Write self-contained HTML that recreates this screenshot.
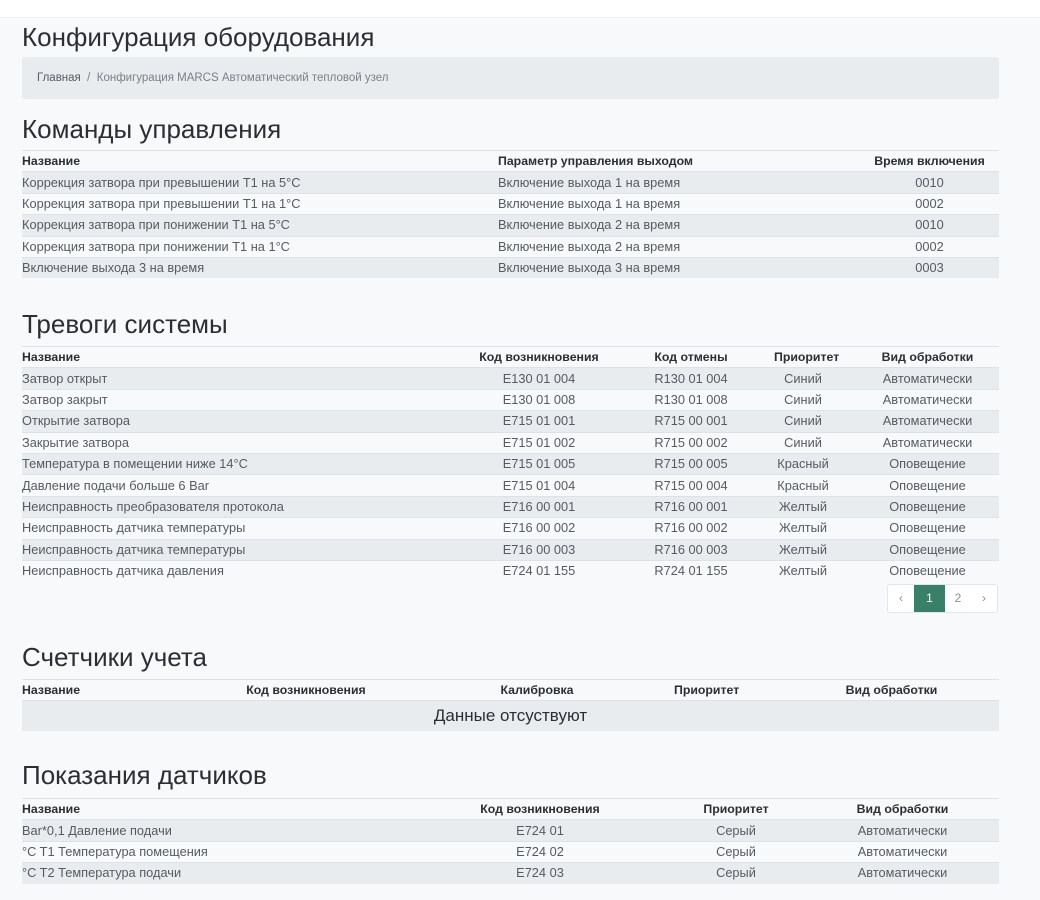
<!DOCTYPE html>
<html><head><meta charset="utf-8"><style>
body{margin:0;width:1040px;height:900px;background:#f8f9fa;font-family:"Liberation Sans","DejaVu Sans",sans-serif;color:#555b61;position:relative;overflow:hidden}
.top{position:absolute;left:0;top:0;width:1040px;height:17px;background:#fff;border-bottom:1px solid #eceef0}
.h{position:absolute;left:22px;font-size:26px;color:#2b2f33;white-space:nowrap;margin:0;font-weight:normal}
.bc{position:absolute;left:22px;top:57px;width:977px;height:42px;background:#e9ecef;border-radius:3px;font-size:11.5px;line-height:42px;color:#7a8087}
.bc span{color:#555b61;margin-left:15px}
table{position:absolute;left:22px;width:977px;border-collapse:collapse;table-layout:fixed;font-size:12.8px}
td,th{height:20.4px;padding:0;white-space:nowrap;overflow:visible;text-align:center;border-top:1px solid #dee2e6;line-height:14px}
th{font-weight:bold;color:#2b2f33;border-bottom:1px solid #dee2e6;font-size:12.3px}
td:first-child,th:first-child{text-align:left}
tbody tr:nth-child(odd){background:#e9ecef}
.l{text-align:left!important}
.pg{position:absolute;left:887px;top:584px;height:27px;display:flex;border:1px solid #e3e6e9;border-radius:3px;background:#fff;font-size:12px;color:#8a9096}
.pg div{width:26px;line-height:27px;text-align:center}
.pg .a{background:#3a7f67;color:#fff;width:31px}
</style></head><body>
<div class="top"></div>
<h1 class="h" style="top:22px">Конфигурация оборудования</h1>
<div class="bc"><span>Главная</span> &nbsp;/&nbsp; Конфигурация MARCS Автоматический тепловой узел</div>

<h2 class="h" style="top:114px">Команды управления</h2>
<table style="top:150px"><colgroup><col style="width:476px"><col style="width:362px"><col style="width:139px"></colgroup>
<thead><tr><th>Название</th><th class="l">Параметр управления выходом</th><th>Время включения</th></tr></thead>
<tbody>
<tr><td>Коррекция затвора при превышении Т1 на 5°С</td><td class="l">Включение выхода 1 на время</td><td>0010</td></tr>
<tr><td>Коррекция затвора при превышении Т1 на 1°С</td><td class="l">Включение выхода 1 на время</td><td>0002</td></tr>
<tr><td>Коррекция затвора при понижении Т1 на 5°С</td><td class="l">Включение выхода 2 на время</td><td>0010</td></tr>
<tr><td>Коррекция затвора при понижении Т1 на 1°С</td><td class="l">Включение выхода 2 на время</td><td>0002</td></tr>
<tr><td>Включение выхода 3 на время</td><td class="l">Включение выхода 3 на время</td><td>0003</td></tr>
</tbody></table>

<h2 class="h" style="top:309px">Тревоги системы</h2>
<table style="top:346px"><colgroup><col style="width:448px"><col style="width:138px"><col style="width:166px"><col style="width:58px"><col style="width:167px"></colgroup>
<thead><tr><th>Название</th><th>Код возникновения</th><th>Код отмены</th><th>Приоритет</th><th style="padding-left:24px">Вид обработки</th></tr></thead>
<tbody>
<tr><td>Затвор открыт</td><td>E130 01 004</td><td>R130 01 004</td><td>Синий</td><td style="padding-left:24px">Автоматически</td></tr>
<tr><td>Затвор закрыт</td><td>E130 01 008</td><td>R130 01 008</td><td>Синий</td><td style="padding-left:24px">Автоматически</td></tr>
<tr><td>Открытие затвора</td><td>E715 01 001</td><td>R715 00 001</td><td>Синий</td><td style="padding-left:24px">Автоматически</td></tr>
<tr><td>Закрытие затвора</td><td>E715 01 002</td><td>R715 00 002</td><td>Синий</td><td style="padding-left:24px">Автоматически</td></tr>
<tr><td>Температура в помещении ниже 14°С</td><td>E715 01 005</td><td>R715 00 005</td><td>Красный</td><td style="padding-left:24px">Оповещение</td></tr>
<tr><td>Давление подачи больше 6 Bar</td><td>E715 01 004</td><td>R715 00 004</td><td>Красный</td><td style="padding-left:24px">Оповещение</td></tr>
<tr><td>Неисправность преобразователя протокола</td><td>E716 00 001</td><td>R716 00 001</td><td>Желтый</td><td style="padding-left:24px">Оповещение</td></tr>
<tr><td>Неисправность датчика температуры</td><td>E716 00 002</td><td>R716 00 002</td><td>Желтый</td><td style="padding-left:24px">Оповещение</td></tr>
<tr><td>Неисправность датчика температуры</td><td>E716 00 003</td><td>R716 00 003</td><td>Желтый</td><td style="padding-left:24px">Оповещение</td></tr>
<tr><td>Неисправность датчика давления</td><td>E724 01 155</td><td>R724 01 155</td><td>Желтый</td><td style="padding-left:24px">Оповещение</td></tr>
</tbody></table>
<div class="pg"><div>‹</div><div class="a">1</div><div>2</div><div>›</div></div>

<h2 class="h" style="top:642px">Счетчики учета</h2>
<table style="top:679px"><colgroup><col style="width:190px"><col style="width:188px"><col style="width:274px"><col style="width:58px"><col style="width:267px"></colgroup>
<thead><tr><th>Название</th><th>Код возникновения</th><th>Калибровка</th><th>Приоритет</th><th style="padding-left:52px">Вид обработки</th></tr></thead>
<tbody><tr><td colspan="5" style="text-align:center;font-size:17px;height:30px;color:#2b2f33">Данные отсуствуют</td></tr></tbody></table>

<h2 class="h" style="top:760px">Показания датчиков</h2>
<table style="top:798px"><colgroup><col style="width:438px"><col style="width:160px"><col style="width:232px"><col style="width:147px"></colgroup>
<thead><tr><th>Название</th><th>Код возникновения</th><th>Приоритет</th><th style="padding-right:46px">Вид обработки</th></tr></thead>
<tbody>
<tr><td>Bar*0,1 Давление подачи</td><td>E724 01</td><td>Серый</td><td style="padding-right:46px">Автоматически</td></tr>
<tr><td>°C T1 Температура помещения</td><td>E724 02</td><td>Серый</td><td style="padding-right:46px">Автоматически</td></tr>
<tr><td>°C T2 Температура подачи</td><td>E724 03</td><td>Серый</td><td style="padding-right:46px">Автоматически</td></tr>
</tbody></table>
</body></html>
